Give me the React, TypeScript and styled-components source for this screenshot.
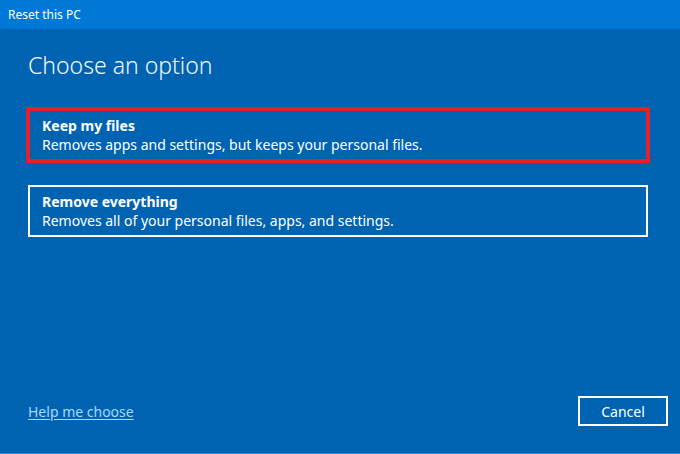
import React from "react";
import styled, { createGlobalStyle } from "styled-components";

/**
 * STYLES
 */
const GlobalStyle = createGlobalStyle`
  html, body {
    margin: 0;
    padding: 0;
    background: #0063b1;
  }
  * {
    box-sizing: border-box;
  }
`;

const StyledWindow = styled.div`
  width: 680px;
  height: 454px;
  display: flex;
  flex-direction: column;
  background: #0063b1;
  border-bottom: 1px solid #2a86d0;
  font-family: "Noto Sans", "Open Sans", sans-serif;
  color: #fff;
`;

const StyledTitleBar = styled.div`
  height: 29px;
  padding: 0 8px;
  display: flex;
  align-items: center;
  background: #0078d7;
  font-size: 12px;
  color: #fff;
`;

const StyledBody = styled.div`
  flex: 1;
  padding: 18px 12px 27px 28px;
  display: flex;
  flex-direction: column;
`;

const StyledHeading = styled.h1`
  margin: 0 0 26px 0;
  font-size: 23px;
  font-weight: 300;
  line-height: 36px;
  color: #f2f7fc;
`;

const StyledOptionList = styled.div`
  width: 620px;
  display: flex;
  flex-direction: column;
  gap: 24px;
`;

const StyledOption = styled.div<{ $selected?: boolean }>`
  height: 52px;
  padding: 4px 12px;
  display: flex;
  flex-direction: column;
  justify-content: center;
  border: 2px solid ${({ $selected }) => ($selected ? "#e5202c" : "#fff")};
  outline: ${({ $selected }) => ($selected ? "2px solid #e5202c" : "none")};
  cursor: pointer;
`;

const StyledOptionTitle = styled.div`
  font-size: 14px;
  font-weight: 700;
  line-height: 19px;
`;

const StyledOptionText = styled.div`
  font-size: 14px;
  line-height: 19px;
`;

const StyledFooter = styled.div`
  margin-top: auto;
  display: flex;
  align-items: center;
  justify-content: space-between;
`;

const StyledLink = styled.a`
  font-size: 14px;
  color: #a6d8ff;
  text-decoration: underline;
  text-underline-offset: 2px;
  cursor: pointer;
`;

const StyledButton = styled.button`
  width: 90px;
  height: 30px;
  padding: 0;
  background: transparent;
  border: 2px solid #fff;
  font-family: inherit;
  font-size: 14px;
  color: #fff;
  cursor: pointer;
`;

/**
 * COMPONENT
 */
const options = [
  {
    title: "Keep my files",
    text: "Removes apps and settings, but keeps your personal files.",
    selected: true,
  },
  {
    title: "Remove everything",
    text: "Removes all of your personal files, apps, and settings.",
    selected: false,
  },
];

export const App = () => {
  return (
    <>
      <GlobalStyle />
      <StyledWindow>
        <StyledTitleBar>Reset this PC</StyledTitleBar>
        <StyledBody>
          <StyledHeading>Choose an option</StyledHeading>
          <StyledOptionList>
            {options.map((option) => (
              <StyledOption key={option.title} $selected={option.selected}>
                <StyledOptionTitle>{option.title}</StyledOptionTitle>
                <StyledOptionText>{option.text}</StyledOptionText>
              </StyledOption>
            ))}
          </StyledOptionList>
          <StyledFooter>
            <StyledLink>Help me choose</StyledLink>
            <StyledButton>Cancel</StyledButton>
          </StyledFooter>
        </StyledBody>
      </StyledWindow>
    </>
  );
};

export default App;
